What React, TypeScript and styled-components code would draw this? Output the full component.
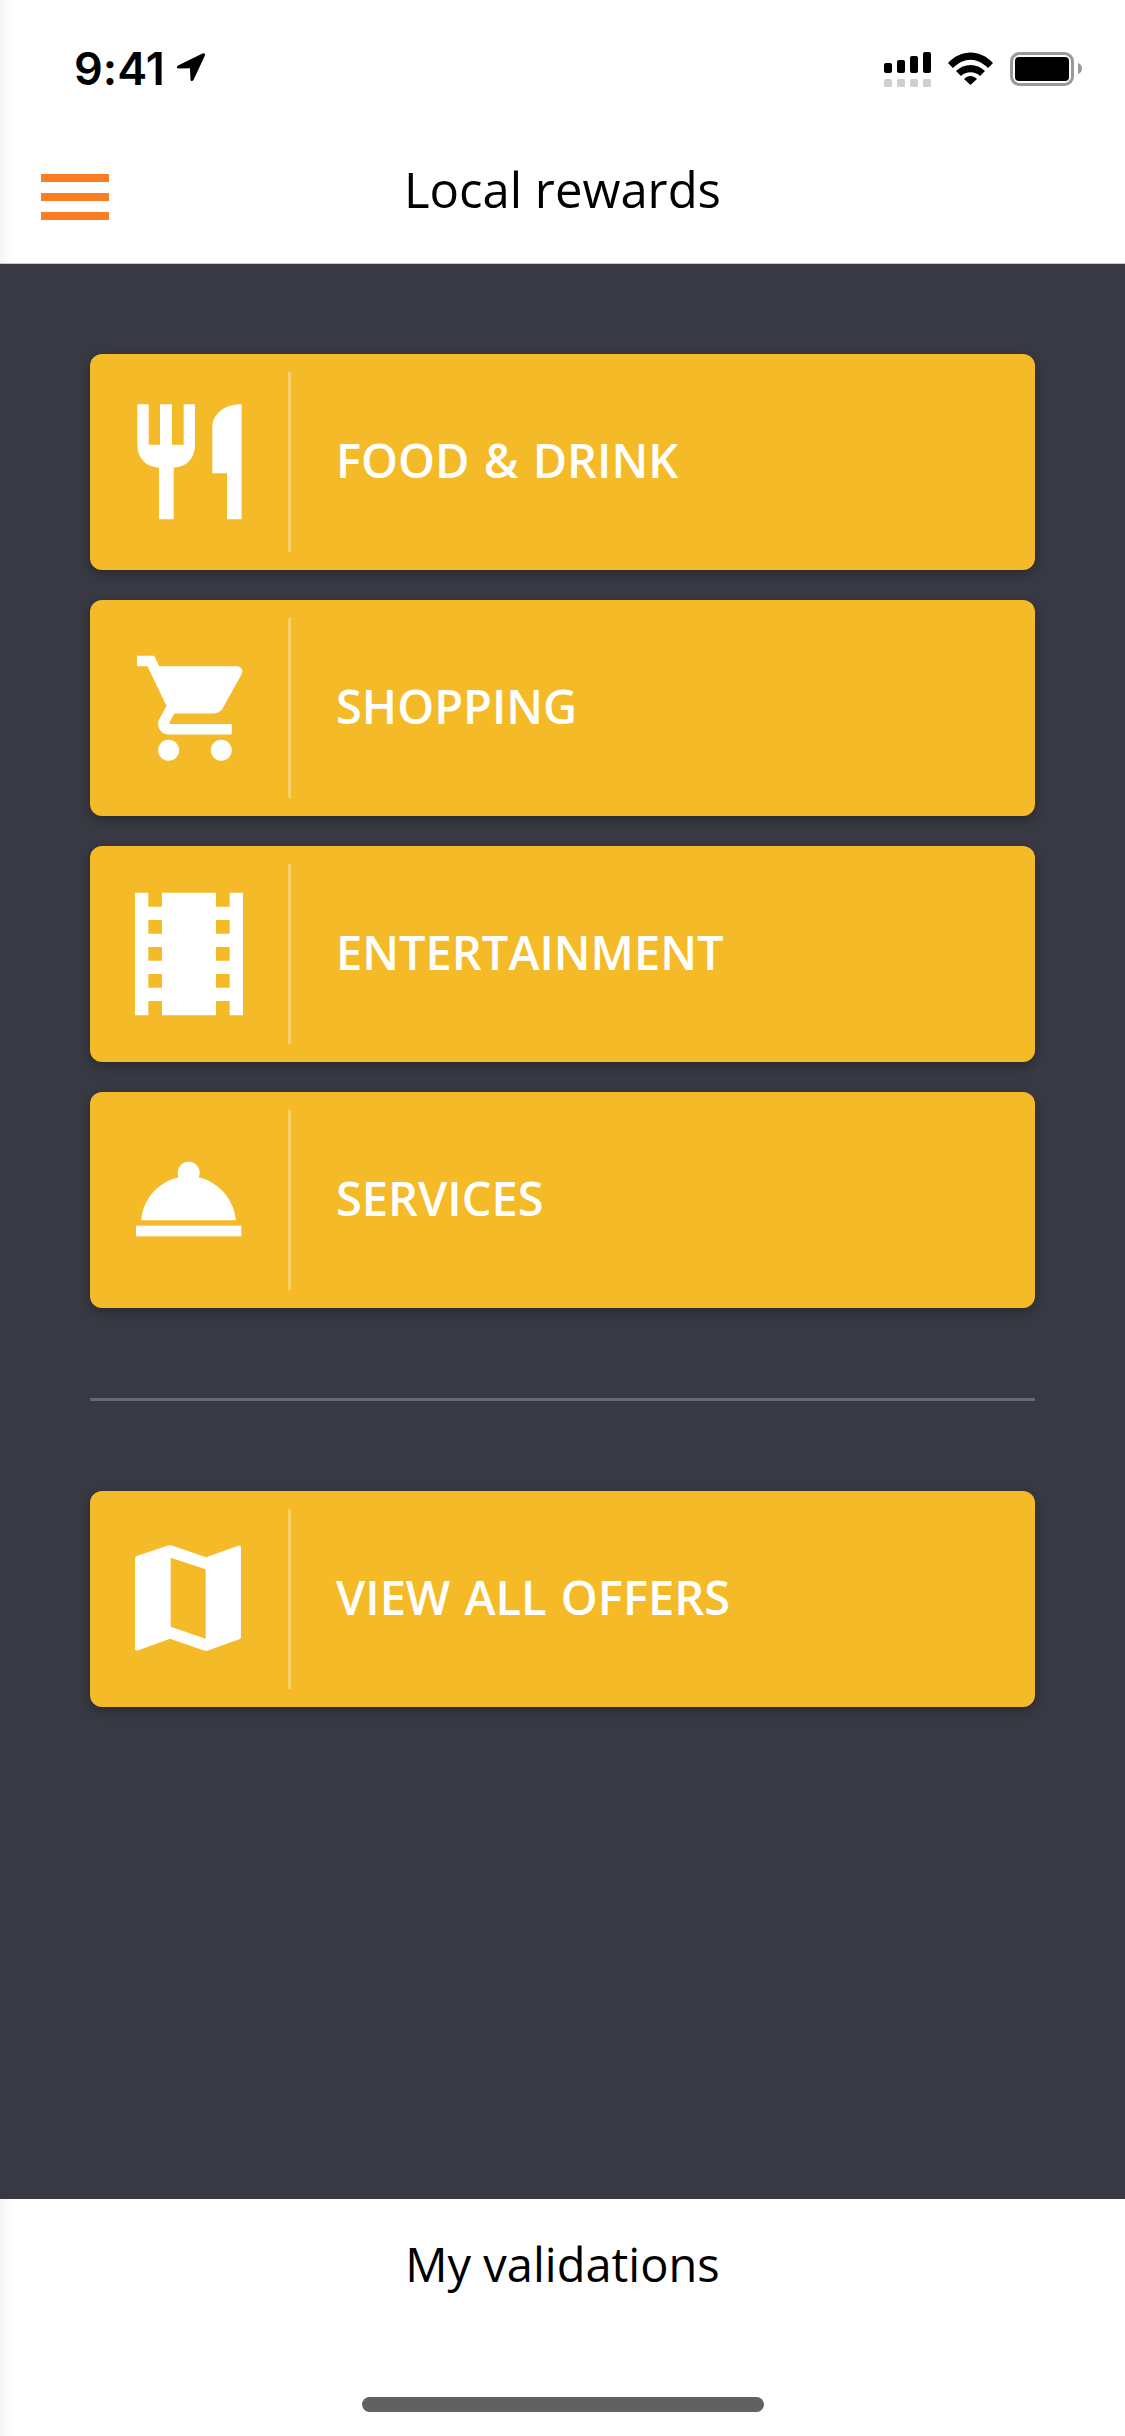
import React from "react";
import styled, { createGlobalStyle } from "styled-components";

const Global = createGlobalStyle`
  html, body { margin: 0; padding: 0; background: #fff; }
  * { box-sizing: border-box; }
`;

const Page = styled.div`
  width: 1125px;
  height: 2436px;
  display: flex;
  flex-direction: column;
  font-family: "Open Sans", Lato, sans-serif;
  font-variant-ligatures: none;
  overflow: hidden;
`;

const Top = styled.header`
  height: 264px;
  flex: none;
  background: linear-gradient(90deg, #f5f5f5, #fff 12px);
  border-bottom: 1px solid #c9c9cc;
`;

const StatusBar = styled.div`
  height: 100px;
  padding: 52px 43px 0 74px;
  display: flex;
  justify-content: space-between;
  align-items: flex-start;
`;

const Clock = styled.div`
  display: flex;
  align-items: flex-start;
  gap: 11px;
  font-family: Inter, sans-serif;
  font-weight: 600;
  font-size: 45px;
  line-height: 33px;
  color: #000;
`;

const StatusIcons = styled.svg`
  display: block;
`;

const Nav = styled.div`
  display: grid;
  grid-template-columns: 1fr auto 1fr;
  padding: 0 41px;
`;

const Menu = styled.button`
  width: 68px;
  height: 46px;
  margin-top: 74px;
  padding: 0;
  border: 0;
  background: none;
  display: flex;
  flex-direction: column;
  justify-content: space-between;
`;

const MenuBar = styled.span`
  display: block;
  height: 8px;
  background: #fb7d23;
`;

const Title = styled.h1`
  margin: 60px 0 0;
  font-weight: 400;
  font-size: 49px;
  line-height: 58px;
  color: #000;
  white-space: nowrap;
`;

const Main = styled.main`
  flex: 1;
  background: #383943;
  padding: 90px 90px 0;
  display: flex;
  flex-direction: column;
  gap: 30px;
`;

const Card = styled.a`
  height: 216px;
  flex: none;
  display: flex;
  align-items: center;
  background: #f5ba28;
  border-radius: 12px;
  box-shadow: 0 4px 12px rgba(0, 0, 0, 0.28);
`;

const IconCell = styled.svg`
  width: 198px;
  height: 216px;
  flex: none;
  display: block;
`;

const Rule = styled.span`
  width: 3px;
  height: 180px;
  flex: none;
  background: rgba(255, 255, 255, 0.3);
`;

const Label = styled.span`
  margin: 0 0 4px 45px;
  font-weight: 600;
  font-size: 47px;
  word-spacing: 2px;
  color: #fff;
  white-space: nowrap;
`;

const Separator = styled.hr`
  margin: 60px 0;
  height: 3px;
  border: 0;
  background: #676873;
  flex: none;
`;

const Footer = styled.footer`
  height: 237px;
  flex: none;
  background: linear-gradient(90deg, #f5f5f5, #fff 12px);
  display: flex;
  flex-direction: column;
  align-items: center;
`;

const FooterText = styled.div`
  margin-top: 36px;
  font-weight: 400;
  font-size: 47px;
  line-height: 58px;
  color: #000;
`;

const HomeBar = styled.div`
  margin-top: 104px;
  width: 402px;
  height: 15px;
  border-radius: 8px;
  background: #616161;
`;

const W = "#fff";

const items = [
  {
    label: "FOOD & DRINK",
    box: "30 42 594 648",
    art: (
      <>
        <path fill={W} d="M172 193H206V314H240V193H276V314H311V193H345V314C345 355 320 380 281 383V538H237V383C198 380 172 355 172 314Z" />
        <path fill={W} d="M485 193V538H441V400H397V262C397 225 430 193 485 193Z" />
      </>
    ),
  },
  {
    label: "SHOPPING",
    box: "30 0 594 648",
    art: (
      <path
        fill={W}
        transform="translate(155.2 135.5) scale(15.8 15.75)"
        d="M7 18c-1.1 0-1.99.9-1.99 2S5.9 22 7 22s2-.9 2-2-.9-2-2-2zM1 2v2h2l3.6 7.59-1.35 2.45c-.16.28-.25.61-.25.96 0 1.1.9 2 2 2h12v-2H7.42c-.14 0-.25-.11-.25-.25l.03-.12.9-1.63h7.45c.75 0 1.41-.41 1.75-1.03l3.58-6.48c.08-.14.12-.31.12-.48 0-.55-.45-1-1-1H5.21l-.94-2H1zm16 16c-1.1 0-1.99.9-1.99 2s.89 2 1.99 2 2-.9 2-2-.9-2-2-2z"
      />
    ),
  },
  {
    label: "ENTERTAINMENT",
    box: "30 18 594 648",
    art: (
      <path
        fill={W}
        fillRule="evenodd"
        d="M165 158H205V200H246V158H408V200H449V158H489V526H449V483H408V526H246V483H205V526H165ZM205 240V281H246V240ZM205 321V362H246V321ZM205 402V443H246V402ZM408 240V281H449V240ZM408 321V362H449V321ZM408 402V443H449V402Z"
      />
    ),
  },
  {
    label: "SERVICES",
    box: "30 36 594 648",
    art: (
      <>
        <path fill={W} d="M184 421C190 350 240 305 296 292A33 33 0 1 1 356 292C410 305 460 350 468 421Z" />
        <rect fill={W} x="168" y="437" width="316" height="32" />
      </>
    ),
  },
];

const mapItem = {
  label: "VIEW ALL OFFERS",
  box: "30 33 594 648",
  art: (
    <path
      fill={W}
      fillRule="evenodd"
      d="M165 236Q165 230 170 228L262 197Q270 194 278 197L378 232L475 197Q483 194 483 202V470Q483 476 478 478L386 511Q378 514 370 511L270 476L175 511Q165 514 165 506ZM272 233V440L377 476V268Z"
    />
  ),
};

const Tile = ({ item }: { item: { label: string; box: string; art: React.ReactNode } }) => (
  <Card>
    <IconCell viewBox={item.box} aria-hidden="true">
      {item.art}
    </IconCell>
    <Rule />
    <Label>{item.label}</Label>
  </Card>
);

export default function App() {
  return (
    <Page>
      <Global />
      <Top>
        <StatusBar>
          <Clock>
            9:41
            <svg width="30" height="30" viewBox="0 0 30 30" aria-hidden="true">
              <path d="M2 13.500L26.500 1.600C28.400 .8 29.600 2 28.800 3.800L17.500 28C16.700 29.600 14.600 29.400 14.500 27.500L14 16.300L2.600 16.600C.6 16.600 .2 14.500 2 13.500Z" fill="#000" />
            </svg>
          </Clock>
          <StatusIcons width="198" height="36" viewBox="884 52 198 36" aria-hidden="true">
            <rect x="884" y="63" width="8" height="10" rx="2" />
            <rect x="897" y="60" width="8" height="13" rx="2" />
            <rect x="910" y="56" width="8" height="17" rx="2" />
            <rect x="923" y="52" width="8" height="21" rx="2" />
            <g fill="#cfcfcf">
              <rect x="884" y="79" width="8" height="8" rx="1.500" />
              <rect x="897" y="79" width="8" height="8" rx="1.500" />
              <rect x="910" y="79" width="8" height="8" rx="1.500" />
              <rect x="923" y="79" width="8" height="8" rx="1.500" />
            </g>
            <path d="M948 63C961 49 980 49 993 63L988 68C977 57 964 57 953 68Z" />
            <path d="M956 71C964 63 977 63 985 71L980 76C975 71 966 71 961 76Z" />
            <path d="M964 79C968 75 973 75 977 79L970.500 85Z" />
            <rect x="1011.500" y="53.500" width="61" height="31" rx="8" fill="none" stroke="#999" strokeWidth="3" />
            <rect x="1015" y="57" width="54" height="24" rx="4" />
            <path d="M1078 63C1081 64 1082 66 1082 68.500C1082 71 1081 73 1078 74Z" fill="#999" />
          </StatusIcons>
        </StatusBar>
        <Nav>
          <Menu aria-label="Menu">
            <MenuBar />
            <MenuBar />
            <MenuBar />
          </Menu>
          <Title>Local rewards</Title>
        </Nav>
      </Top>
      <Main>
        {items.map((it) => (
          <Tile key={it.label} item={it} />
        ))}
        <Separator />
        <Tile item={mapItem} />
      </Main>
      <Footer>
        <FooterText>My validations</FooterText>
        <HomeBar />
      </Footer>
    </Page>
  );
}
